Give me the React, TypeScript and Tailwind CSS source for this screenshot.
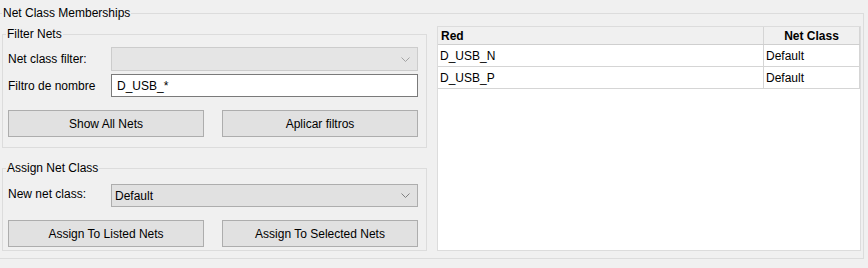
import React from 'react';

const Chevron: React.FC<{ color: string }> = ({ color }) => (
  <svg width="9" height="5" viewBox="0 0 9 5" className="shrink-0">
    <polyline points="0.5,0.5 4.5,4.5 8.5,0.5" fill="none" stroke={color} strokeWidth="1" />
  </svg>
);

const WinButton: React.FC<{ label: string; className?: string }> = ({ label, className }) => (
  <button
    className={`h-[27px] bg-[#e1e1e1] border border-[#adadad] text-[12px] leading-[16px] text-black ${className ?? ''}`}
  >
    {label}
  </button>
);

const rows = [
  { net: 'D_USB_N', cls: 'Default' },
  { net: 'D_USB_P', cls: 'Default' },
];

const App: React.FC = () => {
  return (
    <div
      className="w-[868px] h-[268px] bg-[#f0f0f0] overflow-hidden pt-[5px] text-[12px] leading-[16px] text-black"
      style={{ fontFamily: '"Liberation Sans", Arial, sans-serif' }}
    >
      {/* Outer group box */}
      <fieldset className="ml-[-1px] w-[865px] border border-[#dcdcdc] p-0 m-0">
        <legend className="ml-[2px] px-[1px] leading-[16px]">Net Class Memberships</legend>
        <div className="flex items-start gap-[10px] pl-[2px] pr-[2px] pt-[5px] pb-[7px]">
          {/* Left column */}
          <div className="w-[425px] flex flex-col gap-[12px]">
            <fieldset className="border border-[#dcdcdc] p-0 m-0 h-[122px]">
              <legend className="ml-[3px] px-[1px] leading-[16px]">Filter Nets</legend>
              <div className="pl-[5px] pr-[8px] pt-[5px] flex flex-col">
                <div className="flex items-center h-[24px]">
                  <span className="w-[103px]">Net class filter:</span>
                  <div className="flex-1 h-[24px] bg-[#e5e5e5] border border-[#cccccc] flex items-center justify-end pr-[7px]">
                    <Chevron color="#a3a3a3" />
                  </div>
                </div>
                <div className="flex items-center h-[23px] mt-[3px]">
                  <span className="w-[103px]">Filtro de nombre</span>
                  <div className="flex-1 h-[23px] bg-white border border-[#7a7a7a] flex items-center pl-[5px]">
                    D_USB_*
                  </div>
                </div>
                <div className="flex justify-between mt-[13px]">
                  <WinButton label="Show All Nets" className="w-[196px]" />
                  <WinButton label="Aplicar filtros" className="w-[196px]" />
                </div>
              </div>
            </fieldset>

            <fieldset className="border border-[#dcdcdc] p-0 m-0 h-[91px]">
              <legend className="ml-[3px] px-[1px] leading-[16px]">Assign Net Class</legend>
              <div className="pl-[5px] pr-[8px] pt-[8px] flex flex-col">
                <div className="flex items-center h-[23px]">
                  <span className="w-[103px] mt-[-3px]">New net class:</span>
                  <div className="flex-1 h-[23px] bg-[#e1e1e1] border border-[#adadad] flex items-center justify-between pl-[3px] pr-[7px]">
                    <span>Default</span>
                    <Chevron color="#808080" />
                  </div>
                </div>
                <div className="flex justify-between mt-[13px]">
                  <WinButton label="Assign To Listed Nets" className="w-[196px]" />
                  <WinButton label="Assign To Selected Nets" className="w-[196px]" />
                </div>
              </div>
            </fieldset>
          </div>

          {/* Net table */}
          <div className="w-[424px] h-[225px] bg-white border border-[#dcdcdc]">
            <div className="w-[422px] flex h-[18px] bg-[#f0f0f0] border-b border-[#cfcfcf] font-bold">
              <div className="w-[326px] border-r border-[#d5d5d5] pl-[3px] flex items-center">Red</div>
              <div className="w-[96px] border-r border-[#d5d5d5] flex items-center justify-center">Net Class</div>
            </div>
            {rows.map((r) => (
              <div key={r.net} className="w-[422px] flex h-[22px] border-b border-[#d5d5d5]">
                <div className="w-[326px] border-r border-[#d5d5d5] pl-[2px] flex items-center">{r.net}</div>
                <div className="w-[96px] border-r border-[#d5d5d5] pl-[2px] flex items-center">{r.cls}</div>
              </div>
            ))}
          </div>
        </div>
      </fieldset>
    </div>
  );
};

export default App;
